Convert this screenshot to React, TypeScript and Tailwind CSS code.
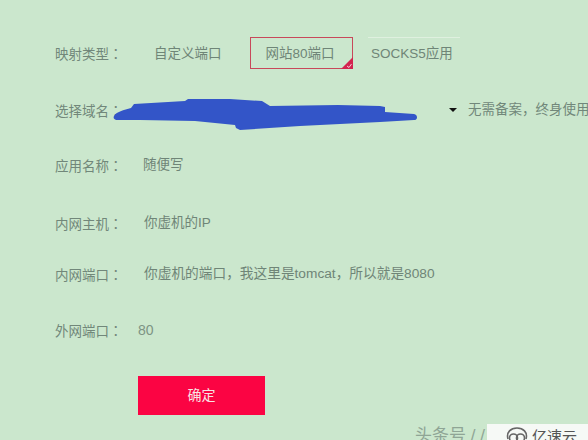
const font = { fontFamily: '"Liberation Sans", "Noto Sans CJK SC", sans-serif' };

function Row({ label, className, children }: { label: string; className: string; children: React.ReactNode }) {
  return (
    <div className={`flex items-center ${className}`}>
      <span className="w-[88px] shrink-0 pt-[3px] text-[13.5px] text-[#71877a]">
        {label}
        <span className="font-['Noto_Sans_CJK_TC']">：</span>
      </span>
      {children}
    </div>
  );
}

export default function App() {
  return (
    <div style={font} className="relative flex h-[440px] w-[588px] flex-col overflow-hidden bg-[#cbe7cd] pl-[55px] pt-[36px]">
      <Row label="映射类型" className="h-[33px]">
        <div className="flex items-center">
          <span className="w-[107px] pl-[11px] pt-[3px] text-[13.5px] text-[#6f8577]">自定义端口</span>
          <div className="relative flex h-[32px] w-[103px] items-center justify-center border border-[#c8485a] pr-[3px] pt-[3px] text-[13.5px] text-[#6f8577]">
            网站80端口
            <svg className="absolute bottom-[-1px] right-[-1px]" width="12" height="12" viewBox="0 0 12 12">
              <path d="M12 0V12H0Z" fill="#d3244f" />
              <path d="M6 9l2 1.5L10.5 7" stroke="#f5c9d4" strokeWidth="1" fill="none" />
            </svg>
          </div>
          <div className="ml-[15px] flex h-[32px] w-[92px] items-center border-t border-[#dff0df] pl-[3px] pt-[3px] text-[13.5px] text-[#6f8577]">SOCKS5应用</div>
        </div>
      </Row>
      <Row label="选择域名" className="mt-[25px] h-[32px]">
        <div className="ml-[306px] flex shrink-0 items-center">
          <span className="h-0 w-0 border-x-[4px] border-t-[4px] border-x-transparent border-t-[#111]" />
          <span className="ml-[11px] whitespace-nowrap text-[13.5px] text-[#71877a]">无需备案，终身使用</span>
        </div>
      </Row>
      <Row label="应用名称" className="mt-[23px] h-[32px]">
        <span className="text-[13.5px] text-[#6f8577]">随便写</span>
      </Row>
      <Row label="内网主机" className="mt-[26px] h-[32px]">
        <span className="pl-[1px] text-[13.5px] text-[#6f8577]">你虚机的IP</span>
      </Row>
      <Row label="内网端口" className="mt-[19px] h-[32px]">
        <span className="pl-[1px] pt-[1px] text-[13.7px] text-[#6f8577]">你虚机的端口，我这里是tomcat，所以就是8080</span>
      </Row>
      <Row label="外网端口" className="mt-[24px] h-[32px]">
        <span className="-ml-[5px] pt-[1px] text-[14px] text-[#7d9484]">80</span>
      </Row>
      <button className="ml-[83px] mt-[30px] h-[39px] w-[127px] bg-[#fb0443] text-[14px] text-[#f8e3e3]">确定</button>

      <svg className="absolute left-[110px] top-[95px]" width="312" height="40" viewBox="0 0 312 40">
        <path
          d="M4 21C6 17 14 15 21 13L24 9L75 6L78 4L120 4L152 6L160 11L228 10L270 11L275 12L275 17L304 19C308 20 308 25 304 25L270 27L190 31L130 35L126 33L125 30L85 26L30 25L8 25C4 25 3 23 4 21Z"
          fill="#3355c8"
        />
      </svg>

      <span className="absolute left-[415px] top-[423px] text-[17px] text-[#8fa595]">头条号 / /</span>
      <div className="absolute bottom-0 left-[487px] flex h-[16px] w-[101px] items-start bg-[#f6f9f6] pl-[18px] pt-[3px]">
        <svg width="24" height="14" viewBox="0 0 24 14" fill="none" stroke="#666" strokeWidth="1.6">
          <path d="M3 12C1 5 6 1 12 1S23 5 21 12" />
          <circle cx="8.5" cy="11" r="4" />
          <circle cx="15.5" cy="11" r="4" />
        </svg>
        <span className="ml-[3px] mt-[2px] text-[15px] leading-[15px] text-[#555]">亿速云</span>
      </div>
    </div>
  );
}
